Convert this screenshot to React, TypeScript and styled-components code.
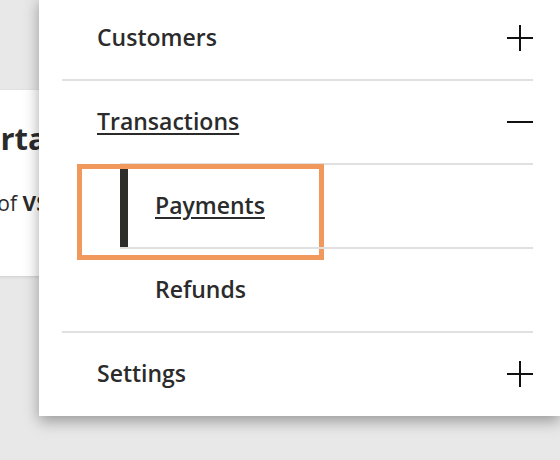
import styled, { createGlobalStyle } from 'styled-components';

const GlobalStyle = createGlobalStyle`
    html, body {
        margin: 0;
        padding: 0;
        background: #e8e8e8;
        font-family: "Open Sans", "Noto Sans", sans-serif;
        color: #2b2b2b;
    }
`

interface ItemProps {
    first?: boolean;
    active?: boolean;
}

const Plus = () => (
    <svg width={26} height={26} viewBox="0 0 26 26">
        <path d="M13 0V26M0 13H26" stroke="#111" strokeWidth={2} fill="none"/>
    </svg>
)

const Minus = () => (
    <svg width={26} height={26} viewBox="0 0 26 26">
        <path d="M0 13H26" stroke="#111" strokeWidth={2} fill="none"/>
    </svg>
)

const App = () => {
    return (
        <Page>
            <GlobalStyle/>
            <Content>
                <Card>
                    <CardTitle>Important</CardTitle>
                    <CardText>A short list of <b>VSPs</b> here</CardText>
                </Card>
            </Content>
            <Menu>
                <List>
                    <Item first>
                        <Row>
                            <Label>Customers</Label>
                            <Plus/>
                        </Row>
                    </Item>
                    <Item>
                        <Row>
                            <Label underline>Transactions</Label>
                            <Minus/>
                        </Row>
                        <SubList>
                            <SubItem>
                                <SubLink active>Payments</SubLink>
                                <FocusRing/>
                            </SubItem>
                            <SubItem>
                                <SubLink>Refunds</SubLink>
                            </SubItem>
                        </SubList>
                    </Item>
                    <Item>
                        <Row>
                            <Label>Settings</Label>
                            <Plus/>
                        </Row>
                    </Item>
                </List>
            </Menu>
        </Page>
    )
}

const Page = styled.div`
    position: relative;
    height: 460px;
    overflow: hidden;
`
const Content = styled.div`
    padding-top: 90px;
`
const Card = styled.div`
    margin-left: -79px;
    width: 340px;
    height: 186px;
    background: #fff;
    box-sizing: border-box;
    padding-top: 26px;
    box-shadow: 0 1px 3px rgba(0,0,0,0.12);
`
const CardTitle = styled.h2`
    margin: 0;
    font-size: 31px;
    font-weight: 700;
    line-height: 44px;
    white-space: nowrap;
`
const CardText = styled.p`
    margin: 28px 0 0 -33px;
    font-size: 21px;
    line-height: 30px;
    white-space: nowrap;
    b { font-weight: 700; }
`
const Menu = styled.nav`
    position: absolute;
    top: -3px;
    left: 39px;
    right: 0;
    background: #fff;
    padding: 0 27px 1px 23px;
    box-shadow: 0 5px 14px rgba(0,0,0,0.35);
`
const List = styled.ul`
    list-style: none;
    margin: 0;
    padding: 0;
`
const Item = styled.li<ItemProps>`
    border-top: ${props => props.first ? 'none' : '2px solid #e0e0e0'};
`
const Row = styled.div`
    height: 82px;
    box-sizing: border-box;
    display: flex;
    align-items: center;
    justify-content: space-between;
    padding-left: 35px;
`
const Label = styled.span<{underline?: boolean}>`
    font-size: 23px;
    font-weight: 600;
    line-height: 28px;
    margin-bottom: 3px;
    text-decoration: ${props => props.underline ? 'underline' : 'none'};
    text-underline-offset: 3px;
    text-decoration-thickness: 2px;
`
const SubList = styled.ul`
    list-style: none;
    margin: 0 0 0 58px;
    padding: 0;
`
const SubItem = styled.li`
    position: relative;
    border-top: 2px solid #e0e0e0;
`
const SubLink = styled.a<ItemProps>`
    display: flex;
    align-items: center;
    height: 82px;
    box-sizing: border-box;
    padding: 0 0 3px ${props => props.active ? '27px' : '35px'};
    border-left: ${props => props.active ? '8px solid #2d2d2a' : 'none'};
    font-size: 23px;
    font-weight: 600;
    line-height: 28px;
    color: #2b2b2b;
    text-decoration: ${props => props.active ? 'underline' : 'none'};
    text-underline-offset: 3px;
    text-decoration-thickness: 2px;
`
const FocusRing = styled.span`
    position: absolute;
    left: -43px;
    top: -1px;
    width: 247px;
    height: 96px;
    box-sizing: border-box;
    border: 5px solid #f1995c;
    pointer-events: none;
`

export default App
